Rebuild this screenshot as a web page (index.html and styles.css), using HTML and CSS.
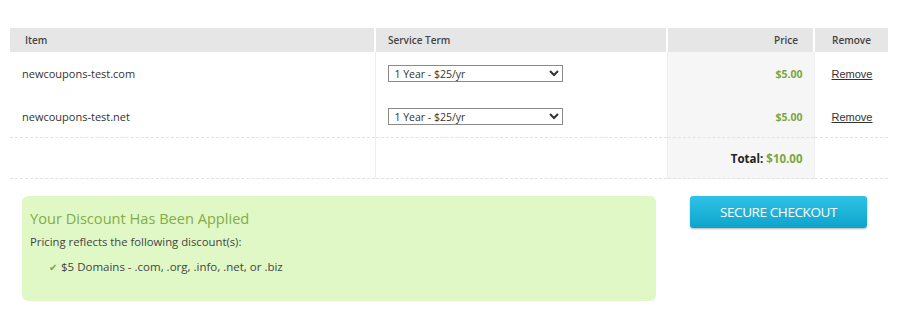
FILE: index.html
```html
<!DOCTYPE html>
<html lang="en">
<head>
    <meta charset="UTF-8">
    <title>Cart</title>
    <link rel="stylesheet" href="styles.css">
</head>
<body>
    <div class="cart">
        <table class="cart-table">
            <colgroup>
                <col class="w-item">
                <col class="w-term">
                <col class="w-price">
                <col class="w-remove">
            </colgroup>
            <thead>
                <tr>
                    <th class="col-item">Item</th>
                    <th class="col-term">Service Term</th>
                    <th class="col-price">Price</th>
                    <th class="col-remove">Remove</th>
                </tr>
            </thead>
            <tbody>
                <tr>
                    <td class="col-item">newcoupons-test.com</td>
                    <td class="col-term">
                        <select class="term-select">
                            <option>1 Year - $25/yr</option>
                        </select>
                    </td>
                    <td class="col-price"><span class="money">$5.00</span></td>
                    <td class="col-remove"><a href="#" class="remove-link">Remove</a></td>
                </tr>
                <tr class="last-item">
                    <td class="col-item">newcoupons-test.net</td>
                    <td class="col-term">
                        <select class="term-select">
                            <option>1 Year - $25/yr</option>
                        </select>
                    </td>
                    <td class="col-price"><span class="money">$5.00</span></td>
                    <td class="col-remove"><a href="#" class="remove-link">Remove</a></td>
                </tr>
                <tr class="total-row">
                    <td class="col-item"></td>
                    <td class="col-term"></td>
                    <td class="col-price"><strong>Total: <span class="money">$10.00</span></strong></td>
                    <td class="col-remove"></td>
                </tr>
            </tbody>
        </table>

        <div class="cart-bottom">
            <div class="discount-box">
                <h3>Your Discount Has Been Applied</h3>
                <p>Pricing reflects the following discount(s):</p>
                <ul>
                    <li><span class="check">&#10004;</span>$5 Domains - .com, .org, .info, .net, or .biz</li>
                </ul>
            </div>
            <button class="checkout-btn">SECURE CHECKOUT</button>
        </div>
    </div>
</body>
</html>
```

FILE: styles.css
```css
body {
    margin: 0;
    font-family: 'Open Sans', sans-serif;
    color: #333;
    background: #fff;
}

.cart {
    padding: 28px 12px 0 10px;
}

/* table */
.cart-table {
    width: 100%;
    table-layout: fixed;
    border-collapse: collapse;
    font-size: 11px;
}

.w-item { width: 365px; }
.w-term { width: 292px; }
.w-price { width: 147px; }
.w-remove { width: 74px; }

.cart-table th {
    height: 24px;
    padding: 0;
    background: #e6e6e6;
    color: #444;
    font-size: 10px;
    font-weight: 600;
    text-align: left;
    border-left: 2px solid #fff;
}

.cart-table th:first-child {
    border-left: none;
}

.cart-table td {
    height: 43px;
    padding: 0;
    border-left: 1px solid #eee;
}

.cart-table td:first-child {
    border-left: none;
}

.col-item {
    padding-left: 12px !important;
}

th.col-item {
    padding-left: 15px !important;
}

.col-term {
    padding-left: 12px !important;
}

.col-price {
    text-align: right !important;
    padding-right: 11px !important;
}

th.col-price {
    padding-right: 15px !important;
}

td.col-price {
    background: #f6f6f6;
}

.col-remove {
    padding-left: 17px !important;
}

.last-item td {
    height: 42px;
    border-bottom: 1px dashed #e2e2e2;
}

.total-row td {
    height: 40px;
    border-bottom: 1px dashed #e2e2e2;
}

.total-row strong {
    color: #222;
    font-size: 11.5px;
}

.term-select {
    width: 175px;
    height: 17px;
    padding: 0 0 0 2px;
    border: 1px solid #8a8a8a;
    border-radius: 0;
    background: #fff;
    font-family: inherit;
    font-size: 10.5px;
    color: #333;
}

.money {
    color: #7ba63c;
    font-weight: bold;
    font-size: 10.5px;
}

.total-row .money {
    font-size: 11.5px;
}

.remove-link {
    font-family: 'Liberation Sans', Arial, sans-serif;
    font-size: 11px;
    color: #333;
}

/* bottom area */
.cart-bottom {
    display: flex;
    align-items: flex-start;
    margin-top: 17px;
    padding-left: 12px;
}

.discount-box {
    width: 634px;
    height: 105px;
    box-sizing: border-box;
    padding: 12px 8px;
    background: #e0f8c6;
    border-radius: 6px;
}

.discount-box h3 {
    margin: 0 0 6px;
    font-size: 14.6px;
    font-weight: normal;
    color: #82ad45;
}

.discount-box p {
    margin: 0;
    font-size: 11.3px;
    color: #444;
}

.discount-box ul {
    list-style: none;
    margin: 10px 0 0;
    padding-left: 19px;
    font-size: 11.5px;
    color: #444;
}

.check {
    margin-right: 4px;
    color: #7ba63c;
    font-size: 10px;
}

.checkout-btn {
    margin-left: 34px;
    width: 177px;
    height: 32px;
    border: none;
    border-radius: 3px;
    background: linear-gradient(to bottom, #2ec3e6, #0ea3cb);
    box-shadow: 0 1px 2px rgba(0,0,0,0.3);
    color: #fff;
    font-family: inherit;
    font-size: 13.5px;
    letter-spacing: -0.4px;
    cursor: pointer;
}
```
